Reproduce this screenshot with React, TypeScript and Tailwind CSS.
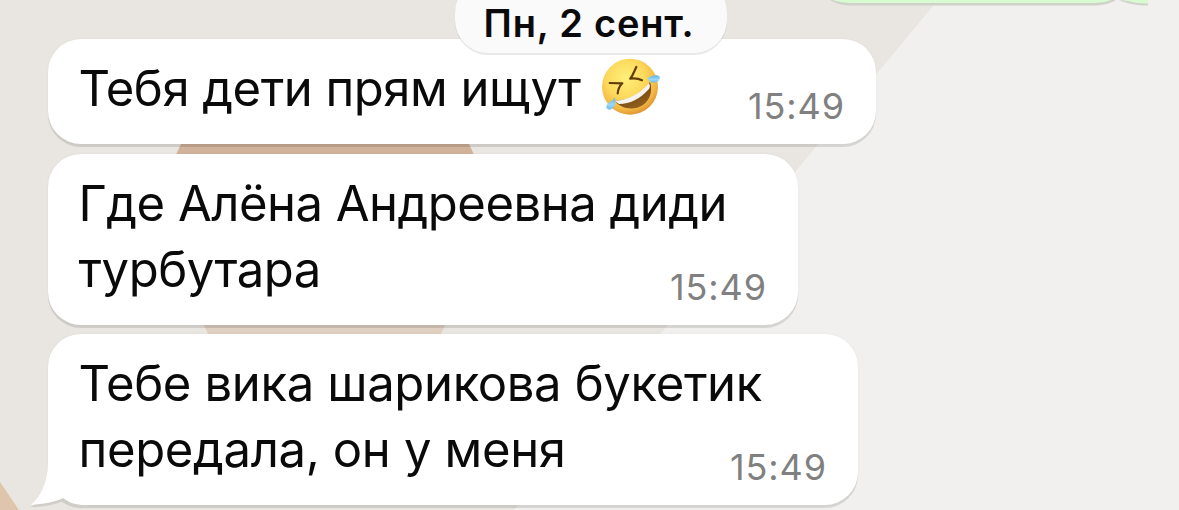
import type { ReactNode } from "react";
import { clsx } from "clsx";

interface BubbleProps {
  lines: ReactNode[];
  time: string;
  className: string;
  tail?: boolean;
}

function Wallpaper() {
  return (
    <svg className="absolute inset-0" width="1179" height="510" viewBox="0 0 1179 510">
      <defs>
        <linearGradient id="sand" x1="0" y1="0" x2="0" y2="1">
          <stop offset="0" stopColor="#d0b199" />
          <stop offset="1" stopColor="#dfd0c2" />
        </linearGradient>
      </defs>
      <rect width="1179" height="510" fill="#e9e6e1" />
      <path d="M938 0H1179V510H514Z" fill="#f1f0ee" />
      <path d="M181 144H469L500 210L441 334H208L150 210Z" fill="url(#sand)" />
      <path d="M0 482L19 510H0Z" fill="#dfc5ab" />
    </svg>
  );
}

function LaughingFace() {
  return (
    <svg className="-my-2.5 ml-[19px] inline-block align-[-2px]" width="62" height="60" viewBox="0 0 62 60">
      <defs>
        <radialGradient id="face" cx="0.42" cy="0.35" r="0.68">
          <stop offset="0" stopColor="#fff07a" />
          <stop offset="0.5" stopColor="#fcd95c" />
          <stop offset="0.82" stopColor="#f3b745" />
          <stop offset="1" stopColor="#dc8f2c" />
        </radialGradient>
        <linearGradient id="mouth" x1="0" y1="0" x2="0.6" y2="1">
          <stop offset="0" stopColor="#58330c" />
          <stop offset="1" stopColor="#93601c" />
        </linearGradient>
        <linearGradient id="tear" x1="0" y1="0" x2="0" y2="1">
          <stop offset="0" stopColor="#5fb4e6" />
          <stop offset="0.6" stopColor="#9ad8f6" />
          <stop offset="1" stopColor="#6bbbe8" />
        </linearGradient>
      </defs>
      <circle cx="30" cy="28.700" r="28" fill="url(#face)" />
      <path d="M15 43C29 42 43 35 50 24C53 33 50 42 43 47C34 53 21 51 15 43Z" fill="url(#mouth)" />
      <path d="M15 43C29 42 42 34 49 25C50.500 28 50 30 48.500 31.500C40 41 30 46 19 46Z" fill="#f7f4f0" />
      <path d="M9.700 25L22.300 25.300C19.500 28 18 31 17.700 35.500" fill="none" stroke="#643c0c" strokeWidth="2.200" strokeLinecap="round" strokeLinejoin="round" />
      <path d="M36.300 9C34 14 33 17.500 30.200 20.700C34.500 20 38.500 20.500 42 22.200" fill="none" stroke="#643c0c" strokeWidth="2.200" strokeLinecap="round" strokeLinejoin="round" />
      <path d="M47 20.800C51 17.500 57 16 59.500 18.500C61 22 57 25 52.500 24.500C49.500 24 49 21.500 47 20.800Z" fill="url(#tear)" />
      <path d="M15 39.500C15.500 44 15.500 50 10.500 51.500C6.500 52 5 49 7.500 46C10 43.500 13 42.500 15 39.500Z" fill="url(#tear)" />
    </svg>
  );
}

function Bubble({ lines, time, className, tail }: BubbleProps) {
  return (
    <div
      className={clsx(
        "relative flex items-end rounded-[33px] bg-white pr-[31px] pl-[30.5px] shadow-[0_3px_0_rgba(0,0,0,0.11),0_0_3px_rgba(0,0,0,0.04)]",
        className
      )}
    >
      {tail && (
        <svg className="absolute -left-[18px] bottom-[-3px]" width="70" height="65" viewBox="0 0 70 65">
          <path d="M1 64C12 64 24 62 33 58C40 63 48 65 58 65V50H20Z" fill="#d0cec9" />
          <path d="M18 0V20C18 40 10 54 1 62C13 61 25 59 33 55C40 60 46 62 55 62H70V0Z" fill="#ffffff" />
        </svg>
      )}
      <div className="relative w-0 grow pb-[22px] text-[49px] leading-[66px] text-[#0a0a0a]">
        {lines.map((line, i) => (
          <p key={i} className="h-[66px] whitespace-nowrap">
            {line}
          </p>
        ))}
      </div>
      <span className="relative pb-[14px] text-[36px] leading-[48px] tracking-[0.9px] text-[#808080]">
        {time}
      </span>
    </div>
  );
}

export default function App() {
  return (
    <div className="relative h-[510px] w-[1179px] overflow-hidden font-['Inter','Noto_Sans',sans-serif]">
      <Wallpaper />
      <svg className="absolute top-0 left-[828px]" width="322" height="6" viewBox="0 0 322 6">
        <path d="M2 0C9 4 15 5.500 24 5.500H264C275 5.500 281 4 288 0Z" fill="#cfd2c9" />
        <path d="M5 0C11 2 16 3 25 3H263C273 3 278 2 283 0Z" fill="#d9fbd2" />
        <path d="M291 0C300 4 309 5.500 320 5.500V2Z" fill="#cfd2c9" />
        <path d="M296 0C304 2.500 311 3.500 320 3.500V0Z" fill="#d9fbd2" />
      </svg>
      <main className="relative flex flex-col items-start pt-[39px] pl-12">
        <Bubble
          className="h-[105px] w-[828px] tracking-[-0.5px]"
          lines={[
            <>
              Тебя дети прям ищут
              <LaughingFace />
            </>,
          ]}
          time="15:49"
        />
        <Bubble
          className="mt-2.5 h-[171px] w-[750px] tracking-[-0.5px]"
          lines={["Где Алёна Андреевна диди", "турбутара"]}
          time="15:49"
        />
        <Bubble
          className="mt-[9px] h-[171px] w-[810px] tracking-[-0.35px]"
          lines={["Тебе вика шарикова букетик", "передала, он у меня"]}
          time="15:49"
          tail
        />
      </main>
      <div className="absolute -top-[20px] left-[455px] flex h-[73px] w-[272px] items-end justify-center rounded-[33px] bg-[#fafafa] pb-[7px] pr-1 text-[38px] leading-[46px] font-semibold tracking-[0.8px] text-[#0a0a0a] shadow-[0_2px_0_rgba(0,0,0,0.09)]">
        Пн, 2 сент.
      </div>
    </div>
  );
}
